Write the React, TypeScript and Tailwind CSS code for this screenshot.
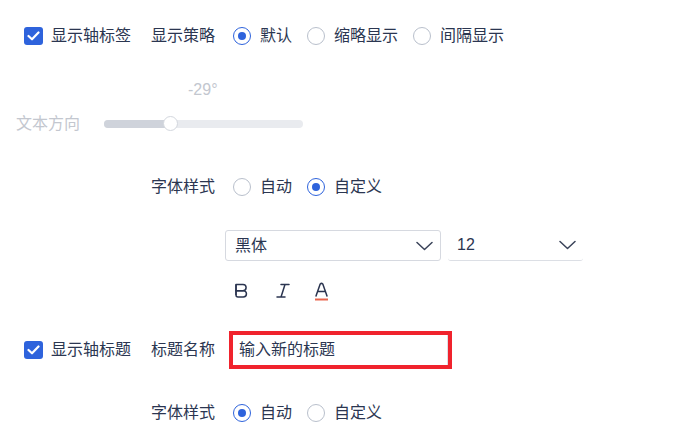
import React from "react";

const FONT = { fontFamily: '"Liberation Sans", "Noto Sans CJK SC", sans-serif' };

function Checkbox() {
  return (
    <div className="w-[19px] h-[18px] rounded-[3px] bg-[#2e63dc] flex items-center justify-center shrink-0">
      <svg width="13" height="10" viewBox="0 0 13 10" fill="none">
        <path d="M1.5 5 L5 8.3 L11.5 1.5" stroke="#fff" strokeWidth="2.2" strokeLinecap="round" strokeLinejoin="round" />
      </svg>
    </div>
  );
}

function Radio({ checked, label }: { checked: boolean; label: string }) {
  return (
    <div className="flex items-center">
      <div
        className={
          checked
            ? "w-[18px] h-[18px] rounded-full border border-[#2e63dc] flex items-center justify-center"
            : "w-[18px] h-[18px] rounded-full border border-[#b9c0cc]"
        }
      >
        {checked && <div className="w-[8px] h-[8px] rounded-full bg-[#2e63dc]" />}
      </div>
      <span className="ml-[9px] text-[16px] leading-[20px] text-[#2b3651]">{label}</span>
    </div>
  );
}

function Chevron() {
  return (
    <svg width="17" height="10" viewBox="0 0 17 10" fill="none">
      <path d="M1 1.5 L8.5 8.5 L16 1.5" stroke="#3a4359" strokeWidth="1.5" strokeLinecap="round" strokeLinejoin="round" />
    </svg>
  );
}

export default function App() {
  return (
    <div className="w-[673px] h-[435px] bg-white overflow-hidden" style={FONT}>
      {/* Row 1 */}
      <div className="mt-[18px] h-[36px] flex items-center pl-[24px]">
        <Checkbox />
        <span className="ml-[8px] text-[16px] text-[#2b3651]">显示轴标签</span>
        <span className="ml-[20px] text-[16px] text-[#2b3651]">显示策略</span>
        <div className="ml-[18px] flex items-center gap-[15px]">
          <Radio checked label="默认" />
          <Radio checked={false} label="缩略显示" />
          <Radio checked={false} label="间隔显示" />
        </div>
      </div>

      {/* angle value */}
      <div className="mt-[26px] h-[20px] pl-[188px] text-[16px] leading-[20px] text-[#c3c7cf]">-29°</div>

      {/* slider */}
      <div className="mt-[12px] h-[24px] flex items-center pl-[16px]">
        <span className="text-[16px] text-[#c3c7cf]">文本方向</span>
        <div className="ml-[24px] relative w-[199px] h-[8px] rounded-full bg-[#e9ebef]">
          <div className="w-[68px] h-[8px] rounded-full bg-[#cfd3db]" />
          <div className="absolute left-[59px] top-[-4px] w-[15px] h-[15px] rounded-full bg-white border border-[#d3d7de]" />
        </div>
      </div>

      {/* font style row */}
      <div className="mt-[33px] h-[36px] flex items-center pl-[151px]">
        <span className="text-[16px] text-[#2b3651]">字体样式</span>
        <div className="ml-[18px] flex items-center gap-[15px]">
          <Radio checked={false} label="自动" />
          <Radio checked label="自定义" />
        </div>
      </div>

      {/* selects */}
      <div className="mt-[25px] flex pl-[225px]">
        <div className="w-[216px] h-[31px] border border-[#d6d9e0] rounded-[3px] flex items-center justify-between pl-[9px] pr-[7px]">
          <span className="text-[16px] text-[#2b3651]">黑体</span>
          <Chevron />
        </div>
        <div className="ml-[7px] w-[135px] h-[31px] border-b border-[#dcdfe5] rounded-[3px] flex items-center justify-between pl-[9px] pr-[7px]">
          <span className="text-[16px] text-[#2b3651]">12</span>
          <Chevron />
        </div>
      </div>

      {/* B I A */}
      <div className="mt-[19px] h-[22px] flex items-center pl-[234px]">
        <svg width="14" height="16" viewBox="0 0 14 16" fill="none">
          <path d="M2 1.5 H9 A3.1 3.1 0 0 1 9 7.7 H2 Z" stroke="#2b3550" strokeWidth="1.5" strokeLinejoin="round" />
          <path d="M2 7.7 H9.3 A3.15 3.15 0 0 1 9.3 14 H4 A2 2 0 0 1 2 12 Z" stroke="#2b3550" strokeWidth="1.5" strokeLinejoin="round" />
          <path d="M2 1.5 V12" stroke="#2b3550" strokeWidth="1.5" />
        </svg>
        <svg className="ml-[28px]" width="14" height="16" viewBox="0 0 14 16" fill="none">
          <path d="M5 1.5 H13 M1 14 H9 M9 1.5 L5 14" stroke="#2b3550" strokeWidth="1.5" strokeLinecap="round" />
        </svg>
        <svg className="ml-[24px]" width="15" height="19" viewBox="0 0 15 19" fill="none">
          <path d="M2 14 L6.2 2 Q7.5 0.8 8.8 2 L13 14 M3.6 9.5 H11.4" stroke="#2b3550" strokeWidth="1.5" strokeLinecap="round" strokeLinejoin="round" />
          <path d="M1 17.5 H14" stroke="#e8654c" strokeWidth="2" />
        </svg>
      </div>

      {/* Row 2 */}
      <div className="mt-[29px] h-[38px] flex items-center pl-[24px]">
        <Checkbox />
        <span className="ml-[8px] text-[16px] text-[#2b3651]">显示轴标题</span>
        <span className="ml-[20px] text-[16px] text-[#2b3651]">标题名称</span>
        <div className="ml-[14px] w-[223px] h-[38px] border-[4px] border-[#f0232d]">
          <div className="h-full border-r border-[#dcdfe5] flex items-center pl-[6px]">
            <span className="text-[16px] text-[#2b3651]">输入新的标题</span>
          </div>
        </div>
      </div>

      {/* last row */}
      <div className="mt-[26px] h-[36px] flex items-center pl-[151px]">
        <span className="text-[16px] text-[#2b3651]">字体样式</span>
        <div className="ml-[18px] flex items-center gap-[15px]">
          <Radio checked label="自动" />
          <Radio checked={false} label="自定义" />
        </div>
      </div>
    </div>
  );
}
